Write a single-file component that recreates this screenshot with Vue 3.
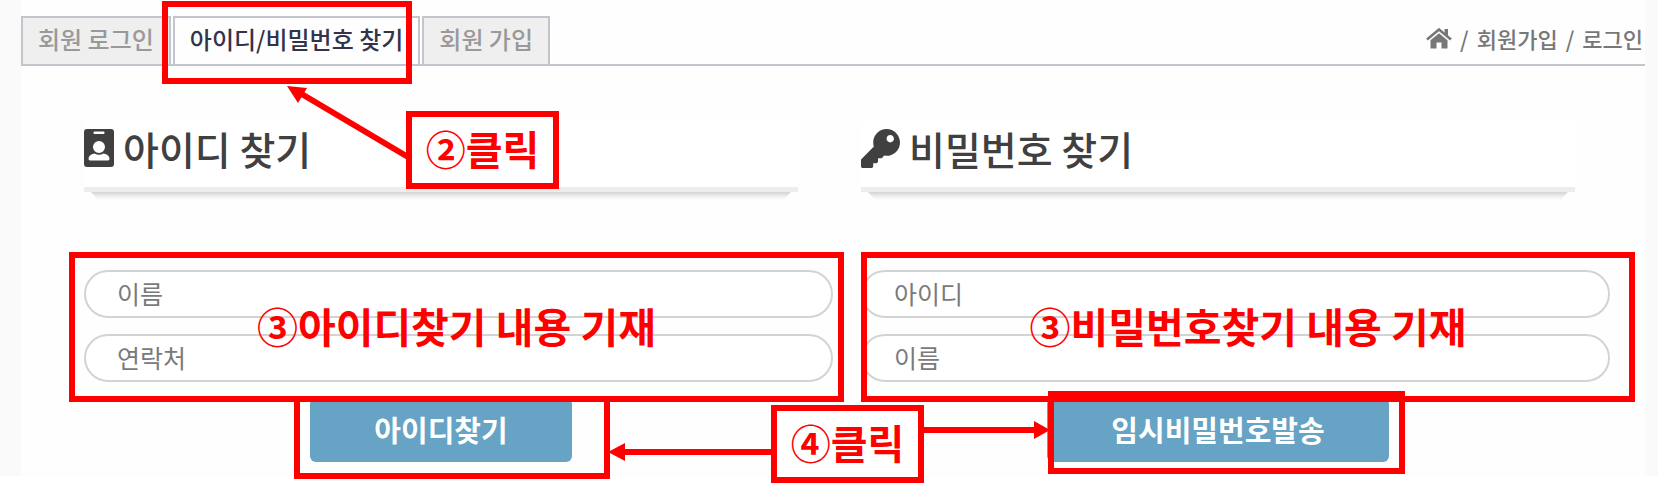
<script setup>
const tabs = [
  { label: '회원 로그인', active: false },
  { label: '아이디/비밀번호 찾기', active: true },
  { label: '회원 가입', active: false },
]

const panels = [
  { key: 'id', title: '아이디 찾기', fields: ['이름', '연락처'], action: '아이디찾기' },
  { key: 'pw', title: '비밀번호 찾기', fields: ['아이디', '이름'], action: '임시비밀번호발송' },
]
</script>

<template>
  <div class="page">
    <div class="shell">
      <main class="content">
        <header class="topbar">
          <nav class="tabs">
            <a v-for="tab in tabs" :key="tab.label" href="#" class="tab" :class="{ active: tab.active }">{{ tab.label }}</a>
          </nav>
          <nav class="crumbs">
            <a href="#" aria-label="홈">
              <svg class="home" viewBox="0 0 26 21" aria-hidden="true">
                <path d="M1 11.5 13 1.5 25 11.5" fill="none" stroke="currentColor" stroke-width="2.6" />
                <path d="M18.5 1H22V8L18.5 5Z" fill="currentColor" />
                <path d="M4.5 12.3 13 5.2 21.5 12.3V20.5H15.5V14.5H10.5V20.5H4.5Z" fill="currentColor" />
              </svg>
            </a>
            <span>/</span>
            <a href="#">회원가입</a>
            <span>/</span>
            <a href="#">로그인</a>
          </nav>
        </header>

        <div class="panels">
          <form v-for="panel in panels" :key="panel.key" class="panel" @submit.prevent>
            <h2 class="title">
              <svg v-if="panel.key === 'id'" class="badge-icon" viewBox="0 0 30 38" aria-hidden="true">
                <path fill-rule="evenodd" fill="currentColor" d="M3 0H27Q30 0 30 3V35Q30 38 27 38H3Q0 38 0 35V3Q0 0 3 0ZM10.5 2.5Q9.5 2.5 9.5 3.5V4Q9.5 5 10.5 5H19.5Q20.5 5 20.5 4V3.5Q20.5 2.5 19.5 2.5ZM15 12A6 6 0 1 0 15 24A6 6 0 1 0 15 12ZM10.5 24.5Q4.5 25.5 4.5 30Q4.5 31.5 6.5 31.5H23.5Q25.5 31.5 25.5 30Q25.5 25.5 19.5 24.5Q15 27 10.5 24.5Z" />
              </svg>
              <svg v-else class="key-icon" viewBox="0 0 512 512" aria-hidden="true">
                <path fill="currentColor" d="M512 176.001C512 273.203 433.202 352 336 352c-11.220 0-22.190-1.062-32.827-3.069l-24.012 27.014A23.999 23.999 0 0 1 261.223 384H224v40c0 13.255-10.745 24-24 24h-40v40c0 13.255-10.745 24-24 24H24c-13.255 0-24-10.745-24-24v-78.059c0-6.365 2.529-12.470 7.029-16.971l161.802-161.802C163.108 213.814 160 195.271 160 176 160 78.798 238.797.001 335.999 0 433.488-.001 512 78.511 512 176.001zM336 128c0 26.510 21.490 48 48 48s48-21.490 48-48-21.490-48-48-48-48 21.490-48 48z" />
              </svg>
              <span>{{ panel.title }}</span>
            </h2>
            <div class="fields">
              <input
                v-for="field in panel.fields"
                :key="field"
                type="text"
                class="field"
                :placeholder="field"
                :aria-label="field"
              />
            </div>
            <button type="submit" class="action">{{ panel.action }}</button>
          </form>
        </div>
      </main>
    </div>

    <div class="guide">
      <svg class="arrows" aria-hidden="true">
        <g stroke="#f00" stroke-width="6">
          <path d="M408 157 300 93" />
          <path d="M772 452H622" />
          <path d="M922 430H1036" />
        </g>
        <g fill="#f00">
          <path d="M287 86 307 88 298 103Z" />
          <path d="M608 452 625 443V461Z" />
          <path d="M1050 430 1034 421V439Z" />
        </g>
      </svg>
      <div class="mark mark-tab"></div>
      <div class="mark mark-id">③아이디찾기 내용 기재</div>
      <div class="mark mark-pw">③비밀번호찾기 내용 기재</div>
      <div class="mark mark-id-button"></div>
      <div class="mark mark-pw-button"></div>
      <div class="mark note note-tab">②클릭</div>
      <div class="mark note note-button">④클릭</div>
    </div>
  </div>
</template>

<style>
body {
  margin: 0;
  background: #fff;
}
</style>

<style scoped>
.page {
  position: relative;
  padding-bottom: 14px;
  background: #fff;
  font-family: "Noto Sans CJK KR", "Noto Sans", sans-serif;
}

.shell {
  padding: 0 13px 0 21px;
  background: #fafafa;
}

.content {
  background: #fefefe;
  padding: 16px 0 14px;
}

.topbar {
  display: flex;
  justify-content: space-between;
  border-bottom: 2px solid #c4c4cc;
}

.tabs {
  display: flex;
  gap: 2px;
}

.tab {
  padding: 0 15px 4px;
  border: 2px solid #c4c4cc;
  border-bottom: 0;
  background: #efefef;
  color: #999;
  font-size: 24px;
  font-weight: 500;
  line-height: 42px;
  text-decoration: none;
  white-space: nowrap;
}

.tab.active {
  background: #fefefe;
  color: #33334a;
}

.crumbs {
  display: flex;
  align-items: center;
  gap: 8px;
  padding: 0 2px 4px 0;
  color: #777;
  font-size: 22px;
  font-weight: 500;
  white-space: nowrap;
}

.crumbs a {
  color: inherit;
  text-decoration: none;
}

.home {
  display: block;
  width: 26px;
  height: 21px;
}

.panels {
  display: grid;
  grid-template-columns: 1fr 1fr;
  gap: 63px;
  padding: 55px 70px 0 63px;
}

.panel {
  display: flex;
  flex-direction: column;
  align-items: center;
  min-width: 0;
}

.title {
  position: relative;
  display: flex;
  align-items: center;
  gap: 9px;
  align-self: stretch;
  height: 54px;
  margin: 0;
  padding-bottom: 12px;
  border-bottom: 5px solid #ededed;
  background: #fff;
  color: #404040;
  font-size: 39px;
  font-weight: 500;
  line-height: 54px;
}

.title::after {
  content: "";
  position: absolute;
  top: 71px;
  left: 0;
  right: 0;
  height: 8px;
  background: linear-gradient(#d4d4d4, #f0f0f0 60%, #fefefe);
  clip-path: polygon(1% 0, 99% 0, 98% 100%, 2% 100%);
}

.badge-icon {
  width: 30px;
  height: 38px;
}

.key-icon {
  width: 39px;
  height: 39px;
}

.fields {
  display: grid;
  gap: 16px;
  align-self: stretch;
  margin: 78px -35px 0 0;
}

.field {
  box-sizing: border-box;
  width: 100%;
  height: 48px;
  padding: 0 31px 2px;
  border: 2px solid #d3d3d3;
  border-radius: 24px;
  background: #fff;
  color: #444;
  font: 25px "Noto Sans CJK KR", "Noto Sans", sans-serif;
}

.field::placeholder {
  color: #7a7a7a;
  opacity: 1;
}

.action {
  margin-top: 16px;
  padding: 0 64px 2px;
  border: 0;
  border-radius: 6px;
  background: #67a3c4;
  color: #fff;
  font: bold 29px/62px "Noto Sans CJK KR", "Noto Sans", sans-serif;
  white-space: nowrap;
}

/* Numbered callouts drawn over the form */
.guide {
  position: absolute;
  inset: 0;
  pointer-events: none;
}

.arrows {
  position: absolute;
  width: 100%;
  height: 100%;
}

.mark {
  position: absolute;
  box-sizing: border-box;
  border: 6px solid #f00;
  color: #f00;
  font-size: 41px;
  font-weight: 700;
  text-align: center;
  white-space: nowrap;
}

.mark-tab {
  left: 162px;
  top: 1px;
  width: 250px;
  height: 83px;
}

.mark-id,
.mark-pw {
  top: 252px;
  height: 150px;
  line-height: 134px;
}

.mark-id {
  left: 69px;
  width: 775px;
}

.mark-pw {
  left: 861px;
  width: 774px;
}

.mark-id-button {
  left: 294px;
  top: 396px;
  width: 316px;
  height: 83px;
}

.mark-pw-button {
  left: 1048px;
  top: 391px;
  width: 357px;
  height: 83px;
}

.note {
  width: 153px;
  height: 78px;
  background: #fff;
  font-size: 40px;
  line-height: 62px;
}

.note-tab {
  left: 406px;
  top: 111px;
}

.note-button {
  left: 771px;
  top: 405px;
}
</style>
